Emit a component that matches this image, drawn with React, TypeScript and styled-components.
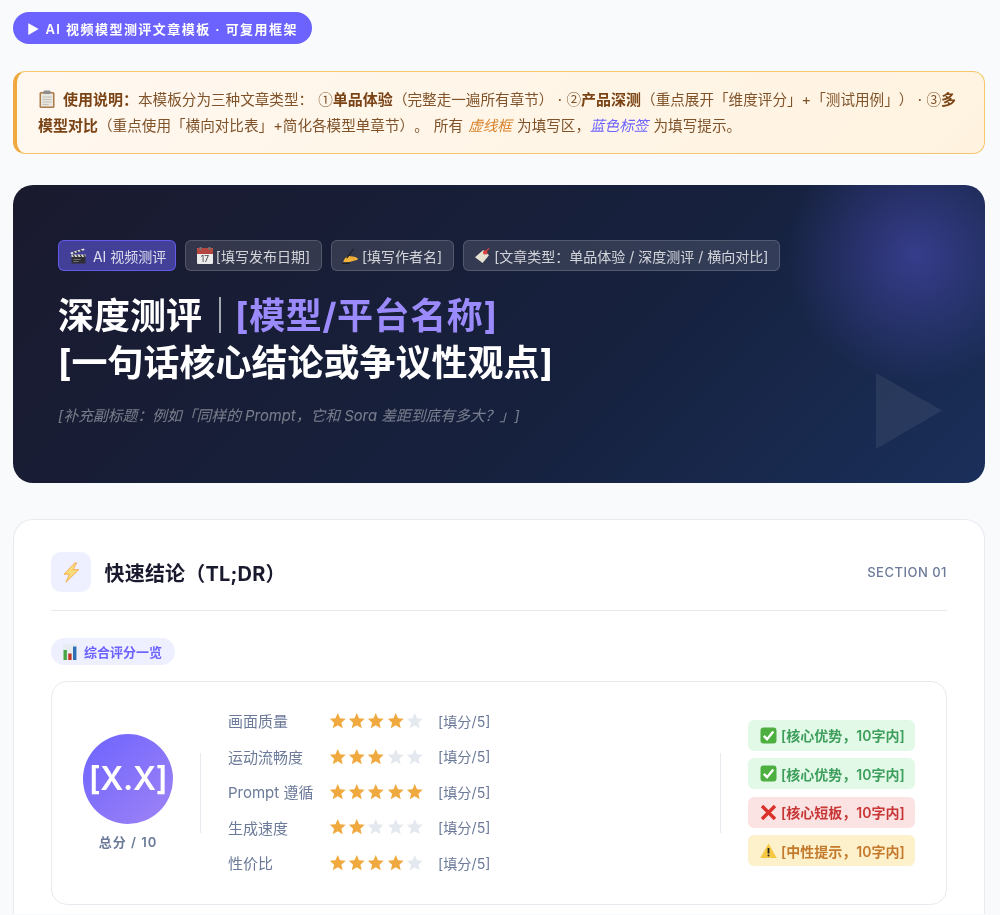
import React from "react";
import styled, { createGlobalStyle } from "styled-components";

const Global = createGlobalStyle`
  html, body { margin: 0; padding: 0; background: #f9fafc; }
  body {
    font-family: Inter, "Noto Sans CJK SC", "Noto Sans", sans-serif;
    color: #1a1a2e;
    text-spacing-trim: space-all;
  }
  * { box-sizing: border-box; }
`;

const Page = styled.div`
  width: 972px;
  margin-left: 13px;
  padding-top: 12px;
  display: flex;
  flex-direction: column;
  align-items: stretch;
  will-change: transform;
`;

const TopPill = styled.div`
  align-self: flex-start;
  height: 32px;
  padding: 0 14px;
  border-radius: 16px;
  background: #6c63ff;
  color: #fff;
  font-size: 13px;
  font-weight: 600;
  letter-spacing: 1.45px;
  display: flex;
  align-items: center;
  margin-bottom: 27px;
  white-space: pre;
`;

const Note = styled.div`
  height: 83px;
  border: 1px solid #f5c76b;
  border-left: 4px solid #f0a93e;
  border-radius: 12px;
  background: linear-gradient(135deg, #fff8f0, #fff3e0);
  padding: 15px 20px 0 21px;
  font-size: 14.6px;
  line-height: 26px;
  word-spacing: 1px;
  color: #7f5229;
  margin-bottom: 31px;
`;

const NoteIcon = styled.span`
  display: inline-block;
  line-height: 0;
  vertical-align: -3px;
  margin-right: 7px;
`;

const Strong = styled.b`
  font-size: 15px;
  line-height: 1;
  font-weight: 700;
  color: #7a4315;
`;

const Circled = styled.span`
  font-family: "Noto Sans CJK SC", sans-serif;
  line-height: 1;
`;

const Dot = styled.span`
  display: inline-block;
  width: 13px;
  line-height: 1;
  text-align: center;
`;

const Dashed = styled.em`
  color: #d9822b;
  font-style: italic;
`;

const BlueTag = styled.em`
  color: #6c63ff;
  font-style: italic;
`;

const Hero = styled.section`
  position: relative;
  height: 298px;
  border-radius: 20px;
  overflow: hidden;
  padding: 55px 45px 0;
  background: linear-gradient(135deg, #1a1a2e 0%, #16213e 60%, #1a2f5a 100%);
  margin-bottom: 36px;
`;

const Glow = styled.div`
  position: absolute;
  top: -60px;
  right: -60px;
  width: 260px;
  height: 260px;
  border-radius: 50%;
  background: radial-gradient(circle, rgba(108, 99, 255, 0.36) 0%, rgba(108, 99, 255, 0) 70%);
`;

const HeroPlay = styled.svg`
  position: absolute;
  right: 43px;
  bottom: 34px;
  width: 66px;
  height: 76px;
`;

const TagRow = styled.div`
  position: relative;
  display: flex;
  gap: 9px;
  margin-bottom: 22px;
`;

const HeroTag = styled.span<{ $accent?: boolean }>`
  height: 31px;
  padding: ${p => (p.$accent ? "0 9px 0 11px" : "0 10.5px")};
  border-radius: 6px;
  font-size: 14px;
  display: flex;
  align-items: center;
  gap: 3px;
  white-space: pre;
  color: ${p => (p.$accent ? "rgba(255,255,255,0.82)" : "rgba(255,255,255,0.78)")};
  background: ${p => (p.$accent ? "rgba(108,99,255,0.5)" : "rgba(255,255,255,0.12)")};
  border: 1px solid ${p => (p.$accent ? "rgba(108,99,255,0.8)" : "rgba(255,255,255,0.16)")};
`;

const HeroTitle = styled.h1`
  position: relative;
  margin: 0 0 18px;
  font-size: 36px;
  line-height: 46.8px;
  font-weight: 700;
  color: #fff;
`;

const TitleAccent = styled.span`
  color: #9b8afb;
  letter-spacing: 0.6px;
  margin-left: -3px;
`;

const TitleBar = styled.span`
  font-weight: 300;
  color: rgba(255, 255, 255, 0.85);
`;

const HeroSub = styled.p`
  margin: 0;
  font-size: 14.8px;
  line-height: 22px;
  font-style: italic;
  color: rgba(255, 255, 255, 0.42);
`;

const Card = styled.section`
  background: #fff;
  border: 1px solid #e8eaf0;
  border-bottom: none;
  border-radius: 20px 20px 0 0;
  padding: 32px 37px 8px;
  height: 395px;
`;

const CardHead = styled.header`
  display: flex;
  align-items: center;
  gap: 13.5px;
  height: 40px;
  margin-bottom: 18px;
`;

const CardIcon = styled.div`
  width: 40px;
  height: 40px;
  border-radius: 10px;
  background: #eeefff;
  display: flex;
  align-items: center;
  justify-content: center;
`;

const CardTitle = styled.h2`
  margin: 0;
  font-size: 20px;
  font-weight: 700;
  letter-spacing: 0.2px;
  color: #1a1a2e;
  flex: 1;
`;

const SectionNo = styled.span`
  font-size: 13px;
  font-weight: 500;
  color: #6b7a99;
  letter-spacing: 0.5px;
`;

const Rule = styled.hr`
  margin: 0 0 27px;
  border: none;
  border-top: 1px solid #e8eaf0;
`;

const SubPill = styled.div`
  display: inline-flex;
  align-items: center;
  gap: 7px;
  height: 27px;
  padding: 0 13px 0 12px;
  border-radius: 14px;
  background: #eeefff;
  color: #6c63ff;
  font-size: 13px;
  font-weight: 600;
  margin-bottom: 16px;
`;

const Panel = styled.div`
  height: 224px;
  border: 1px solid #e8eaf0;
  border-radius: 16px;
  padding: 0 31px;
  display: flex;
  align-items: center;
`;

const ScoreCol = styled.div`
  display: flex;
  flex-direction: column;
  align-items: center;
  gap: 8px;
  width: 90px;
  margin-top: -2px;
`;

const Circle = styled.div`
  width: 90px;
  height: 90px;
  border-radius: 50%;
  background: linear-gradient(135deg, #6c63ff, #a084f5);
  color: #fff;
  font-size: 32px;
  font-weight: 600;
  letter-spacing: -0.3px;
  display: flex;
  align-items: center;
  justify-content: center;
`;

const ScoreCap = styled.div`
  font-size: 13px;
  font-weight: 600;
  letter-spacing: 1px;
  color: #6b7a99;
  white-space: pre;
`;

const VRule = styled.div<{ $gap?: number }>`
  width: 1px;
  height: 80px;
  background: #e8eaf0;
  margin-left: ${p => p.$gap ?? 0}px;
`;

const Bars = styled.div`
  flex: 1;
  display: flex;
  flex-direction: column;
  gap: 14.1px;
  padding-left: 27px;
  margin-top: -2.5px;
`;

const BarRow = styled.div`
  height: 21.4px;
  display: flex;
  align-items: center;
`;

const BarLabel = styled.span`
  width: 101px;
  font-size: 15px;
  color: #6b7a99;
  white-space: nowrap;
`;

const Stars = styled.span`
  width: 109px;
  display: flex;
`;

const Star = styled.span<{ $on: boolean }>`
  width: 19.2px;
  display: flex;
  align-items: center;
  color: ${p => (p.$on ? "#f0a93e" : "#e4e8ef")};
`;

const BarValue = styled.span`
  font-size: 14.2px;
  color: #6b7a99;
`;

const Chips = styled.div`
  display: flex;
  flex-direction: column;
  gap: 7.5px;
  margin-left: 27px;
`;

const toneBg = { good: "#e2f9e8", bad: "#fbe3e3", warn: "#fdf1cb" };
const toneFg = { good: "#3e9e5b", bad: "#c93636", warn: "#c47a2c" };
type Tone = keyof typeof toneBg;

const Chip = styled.div<{ $tone: Tone }>`
  width: 167px;
  height: 31px;
  border-radius: 6px;
  padding-left: 12px;
  display: flex;
  align-items: center;
  gap: 4px;
  font-size: 14px;
  font-weight: 600;
  white-space: pre;
  background: ${p => toneBg[p.$tone]};
  color: ${p => toneFg[p.$tone]};
`;

const StarIcon = () => (
  <svg width="17.5" height="17.5" viewBox="0 0 24 24" fill="currentColor" aria-hidden>
    <path d="M12 1.5l3.1 7.2 7.8.7-5.9 5.2 1.8 7.7L12 18.2l-6.8 4.1 1.8-7.7L1.1 9.4l7.8-.7z" />
  </svg>
);

const Clipboard = () => (
  <svg width="18" height="18" viewBox="0 0 18 18" aria-hidden>
    <rect x="1.5" y="2" width="15" height="16" rx="1.5" fill="#a97a4a" />
    <rect x="3" y="3.5" width="12" height="13" fill="#e8e6df" />
    <rect x="5.5" y="0.5" width="7" height="3.5" rx="1" fill="#8d8d8d" />
    <path d="M4.5 7h9M4.5 9.5h9M4.5 12h9M4.5 14.5h6" stroke="#b9b7ae" strokeWidth="0.8" />
  </svg>
);

const Clapper = () => (
  <svg width="16" height="16" viewBox="0 0 16 16" aria-hidden>
    <rect x="1.5" y="7" width="14" height="8.5" rx="0.6" fill="#2e2e33" />
    <rect x="1.5" y="6.5" width="14" height="2.4" fill="#e2e2e2" />
    <path d="M3 6.5l1.6 2.4M6.5 6.5l1.6 2.4M10 6.5l1.6 2.4M13.4 6.5L15 8.9" stroke="#2e2e33" strokeWidth="1.2" />
    <path d="M1 6.3L14.6 2 14 .4.5 4.6z" fill="#e2e2e2" />
    <path d="M3.2 3.7L4.8 5.4M6.6 2.7L8.2 4.4M10 1.6L11.6 3.3" stroke="#2e2e33" strokeWidth="1.3" />
    <path d="M3.5 11.5h7M3.5 13.5h5" stroke="#8c8c92" strokeWidth="0.7" />
  </svg>
);

const Calendar = () => (
  <svg width="16" height="17" viewBox="0 0 16 17" aria-hidden>
    <rect x="0" y="1" width="16" height="16" rx="1" fill="#ececec" />
    <path d="M0 2a1 1 0 0 1 1-1h14a1 1 0 0 1 1 1v5H0z" fill="#b5453f" />
    <rect x="2.5" y="0" width="2" height="3" fill="#777" />
    <rect x="11.5" y="0" width="2" height="3" fill="#777" />
    <text x="8" y="15" textAnchor="middle" fontSize="8.5" fontFamily="Inter, sans-serif" fill="#444">17</text>
  </svg>
);

const Writing = () => (
  <svg width="17" height="16" viewBox="0 0 17 16" aria-hidden>
    <path d="M1.2 14.2c.8-3 2.6-5.4 5.2-6.2l4.2.4c2.4.4 4.6 1.1 5.2 2.2.3 1-.5 1.6-2 1.7l-6.3 1.7z" fill="#f2b33a" />
    <path d="M4.8 10.2L11.6 1" stroke="#1f1f1f" strokeWidth="1.2" />
    <path d="M0.5 15.4h7.5" stroke="#1f1f1f" strokeWidth="1.1" />
    <path d="M8 9.5c1.5 .2 3 .6 4 1.2" stroke="#d8942a" strokeWidth="0.6" fill="none" />
  </svg>
);

const Label = () => (
  <svg width="17" height="17" viewBox="0 0 17 17" aria-hidden>
    <path d="M9.2 3L15 8.2 8.6 16 1 10.2z" fill="#e6e2d2" />
    <circle cx="11.2" cy="5.4" r="2.2" fill="#d8433f" />
    <path d="M11.6 5L15 1.4" stroke="#d8433f" strokeWidth="1.2" />
  </svg>
);

const Bolt = () => (
  <svg width="17" height="21" viewBox="0 0 17 21" aria-hidden>
    <path d="M12 .8L1 12.2h5.4L3 20.2 15.8 7.6h-5.6L13.6.8z" fill="#fbdc7a" stroke="#f2a23f" strokeWidth="0.8" strokeLinejoin="round" />
  </svg>
);

const BarChart = () => (
  <svg width="14" height="16" viewBox="0 0 14 16" aria-hidden>
    <rect x="0" y="0" width="14" height="16" fill="#e6ecef" />
    <rect x="0.5" y="6" width="3.4" height="10" fill="#49a546" />
    <rect x="5.2" y="9.5" width="3.4" height="6.5" fill="#c4362c" />
    <rect x="10" y="2.5" width="3.4" height="13.5" fill="#2f6fb5" />
  </svg>
);

const Check = () => (
  <svg width="17" height="17" viewBox="0 0 17 17" aria-hidden>
    <rect x="0.5" y="0.5" width="16" height="16" rx="3" fill="#4caf3f" />
    <path d="M3.8 8.8l3.3 3.4 6.2-7.6" fill="none" stroke="#fff" strokeWidth="2.4" />
  </svg>
);

const Cross = () => (
  <svg width="17" height="17" viewBox="0 0 17 17" aria-hidden>
    <path d="M2 2l13 13M15 2L2 15" stroke="#d8322a" strokeWidth="3.4" />
  </svg>
);

const Warn = () => (
  <svg width="17" height="15" viewBox="0 0 17 15" aria-hidden>
    <path d="M8.5 0.5L16.8 15H0.2z" fill="#f6c945" />
    <path d="M8.5 5v5.5" stroke="#222" strokeWidth="1.8" />
    <circle cx="8.5" cy="12.6" r="1" fill="#222" />
  </svg>
);

const rows: [string, number][] = [
  ["画面质量", 4],
  ["运动流畅度", 3],
  ["Prompt 遵循", 5],
  ["生成速度", 2],
  ["性价比", 4],
];

const chips: [Tone, React.ReactNode, string][] = [
  ["good", <Check key="a" />, "[核心优势，10字内]"],
  ["good", <Check key="b" />, "[核心优势，10字内]"],
  ["bad", <Cross key="c" />, "[核心短板，10字内]"],
  ["warn", <Warn key="d" />, "[中性提示，10字内]"],
];

export default function App() {
  return (
    <>
      <Global />
      <Page>
        <TopPill>▶ AI 视频模型测评文章模板 · 可复用框架</TopPill>
        <Note>
          <NoteIcon><Clipboard /></NoteIcon>
          <Strong>使用说明：</Strong>本模板分为三种文章类型： <Circled>①</Circled><Strong>单品体验</Strong>（完整走一遍所有章节）<Dot>·</Dot><Circled>②</Circled><Strong>产品深测</Strong>（重点展开「维度评分」+「测试用例」）<Dot>·</Dot><Circled>③</Circled><Strong>多模型对比</Strong>（重点使用「横向对比表」+简化各模型单章节）。 所有 <Dashed>虚线框</Dashed> 为填写区，<BlueTag>蓝色标签</BlueTag> 为填写提示。
        </Note>
        <Hero>
          <Glow />
          <HeroPlay viewBox="0 0 66 76" aria-hidden>
            <path d="M0 0L66 37.5 0 76z" fill="rgba(255,255,255,0.07)" />
          </HeroPlay>
          <TagRow>
            <HeroTag $accent><Clapper /> AI 视频测评</HeroTag>
            <HeroTag><Calendar />[填写发布日期]</HeroTag>
            <HeroTag><Writing />[填写作者名]</HeroTag>
            <HeroTag><Label />[文章类型：单品体验 / 深度测评 / 横向对比]</HeroTag>
          </TagRow>
          <HeroTitle>
            深度测评<TitleBar>｜</TitleBar><TitleAccent>[模型/平台名称]</TitleAccent>
            <br />
            [一句话核心结论或争议性观点]
          </HeroTitle>
          <HeroSub>[补充副标题：例如「同样的 Prompt，它和 Sora 差距到底有多大？」]</HeroSub>
        </Hero>
        <Card>
          <CardHead>
            <CardIcon><Bolt /></CardIcon>
            <CardTitle>快速结论（TL;DR）</CardTitle>
            <SectionNo>SECTION 01</SectionNo>
          </CardHead>
          <Rule />
          <SubPill><BarChart />综合评分一览</SubPill>
          <Panel>
            <ScoreCol>
              <Circle>[X.X]</Circle>
              <ScoreCap>总分 / 10</ScoreCap>
            </ScoreCol>
            <VRule $gap={27} />
            <Bars>
              {rows.map(([name, n]) => (
                <BarRow key={name}>
                  <BarLabel>{name}</BarLabel>
                  <Stars>
                    {[0, 1, 2, 3, 4].map(i => (
                      <Star key={i} $on={i < n}><StarIcon /></Star>
                    ))}
                  </Stars>
                  <BarValue>[填分/5]</BarValue>
                </BarRow>
              ))}
            </Bars>
            <VRule />
            <Chips>
              {chips.map(([tone, icon, text], i) => (
                <Chip key={i} $tone={tone}>{icon}{text}</Chip>
              ))}
            </Chips>
          </Panel>
        </Card>
      </Page>
    </>
  );
}
